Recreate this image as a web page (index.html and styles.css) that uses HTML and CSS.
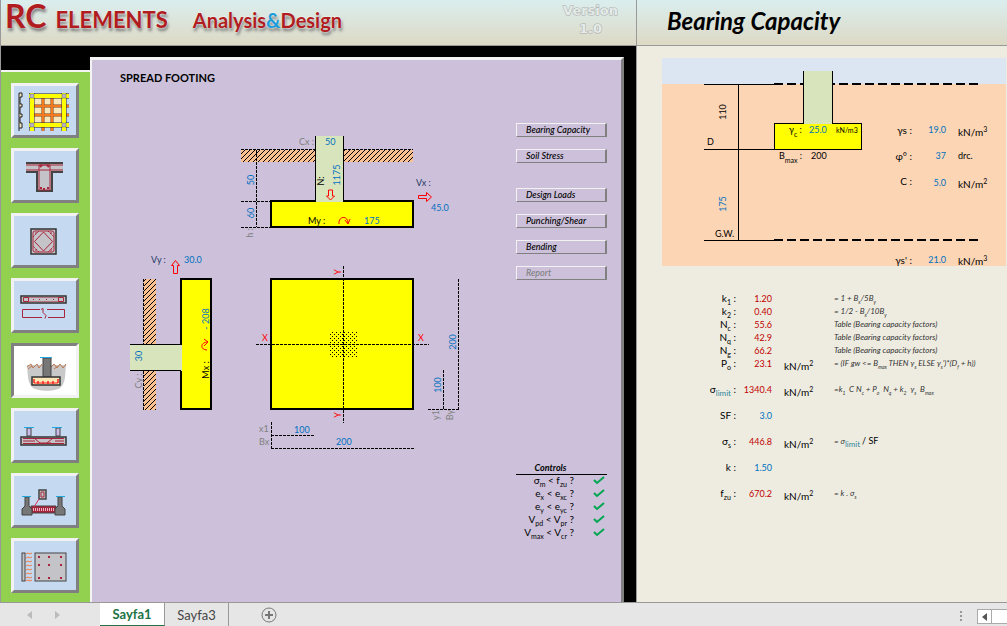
FILE: index.html
```html
<!DOCTYPE html>
<html lang="en">
<head>
  <meta charset="utf-8">
  <title>RC Elements - Spread Footing</title>
  <link rel="stylesheet" href="styles.css">
</head>
<body>
  <main class="panes">
    <section class="pane left">
      <header class="bar">
        <h1 class="logo"><span class="rc">RC</span> <span class="elements">ELEMENTS</span> <span class="analysis">Analysis<i>&amp;</i>Design</span></h1>
        <div class="version">Version<br>1.0</div>
      </header>

      <div class="workspace">
        <nav class="tools">
          <button class="tool" aria-label="Slab">
            <svg viewBox="0 0 62 48">
              <path d="M5 6v38M5 6h3v4H6v7h2v3H6v7h2v3H6v6h2v5H5" fill="#f4e8c0" stroke="#222"/>
              <rect x="17" y="8" width="34" height="31" fill="#f6e8bc" stroke="#222"/>
              <path d="M29 8v36M38 8v36M17 19h38M17 28h38" stroke="#7a3b12" stroke-width="3"/>
              <path d="M29 8v36M38 8v36M17 19h38M17 28h38" stroke="#f47a20" stroke-width="2"/>
              <path d="M18 6v38M50 6v38M15 9h40M15 38h40" stroke="#222" stroke-width="5"/>
              <path d="M18 6v38M50 6v38M15 9h40M15 38h40" stroke="#ff0" stroke-width="4"/>
              <path d="M16 7h4v4h-4zM48 7h4v4h-4zM16 36h4v4h-4zM48 36h4v4h-4z" fill="#b9b6c6" stroke="#666" stroke-width=".5"/>
            </svg>
          </button>
          <button class="tool" aria-label="Beam">
            <svg viewBox="0 0 62 48">
              <path d="M12 10h37v10H38v20H22V20H12z" fill="#c4c4c8"/>
              <path d="M12 11h37M12 20h11v19h15V20h11" fill="none" stroke="#444" stroke-width="2"/>
              <path d="M12 13h37M12 18h37M25 13h11v25H25z" fill="none" stroke="#a8243c"/>
              <path d="M26 15l2-2M35 15l-2-2M26 36h2M29 37h2M33 36h2" stroke="#a8243c" stroke-width="2"/>
            </svg>
          </button>
          <button class="tool" aria-label="Column">
            <svg viewBox="0 0 62 48">
              <rect x="17" y="12" width="25" height="25" fill="#c4c4c8" stroke="#333" stroke-width="1.5"/>
              <rect x="19" y="14" width="21" height="21" rx="2" fill="none" stroke="#a8243c"/>
              <path d="M29.500 15l9 9.500-9 9.500-9-9.500z" fill="none" stroke="#a8243c"/>
              <path d="M19 20l6-6M34 14l6 6M40 29l-6 6M25 35l-6-6M21 16h2M36 16h2M21 33h2M36 33h2" stroke="#a8243c" stroke-dasharray="2 1"/>
            </svg>
          </button>
          <button class="tool" aria-label="Shear wall">
            <svg viewBox="0 0 62 48">
              <rect x="7" y="14" width="45" height="7" fill="#c4c4c8" stroke="#333" stroke-width="1.500"/>
              <path d="M9.500 15.500h5v4h-5zM44.500 15.500h5v4h-5zM19 17.500h1M25 17.500h1M32 17.500h1M39 17.500h1" fill="none" stroke="#a8243c"/>
              <path d="M14 15.500h31M14 19.500h31" stroke="#a8243c" stroke-opacity=".5"/>
              <path d="M14 35.500H8.500v-8H26M44 27.500h6.500v8H34M14 35.500h14M33 27.500h11M27 27.500l2-1v4l3 3-1 3" fill="none" stroke="#a8243c"/>
            </svg>
          </button>
          <button class="tool active" aria-label="Spread footing">
            <svg viewBox="0 0 62 48">
              <path d="M13 18h39c-1 8 0 17-5 22-4 5-24 5-29 0-5-5-4-14-5-22z" fill="#c9c9c9"/>
              <path d="M13 20l4-3 2 4 4-4 2 4 3-4M37 20l3-3 3 4 3-4 3 4 3-4M14 22l4-3M40 22l4-3" fill="none" stroke="#c07850"/>
              <path d="M29 11h8v19h-8z" fill="#777" stroke="#444"/>
              <path d="M26 10.500h12" stroke="#20a8e0"/>
              <rect x="18" y="30" width="28" height="8" fill="#f8e6b4" stroke="#333" stroke-width="1.500"/>
              <path d="M20 36h24" stroke="#f22" stroke-width="1"/>
              <path d="M20 32v4M44 32v4M24 34v3M29 34v3M34 34v3M39 34v3" stroke="#f22" stroke-width="1.500"/>
            </svg>
          </button>
          <button class="tool" aria-label="Combined footing">
            <svg viewBox="0 0 62 48">
              <path d="M13 16h4v8h-4zM42 16h4v8h-4z" fill="#cdbcea" stroke="#444"/>
              <path d="M10 15.500h10M38 15.500h10" stroke="#20a8e0"/>
              <rect x="7" y="25" width="45" height="8" fill="#c4c4c8" stroke="#333" stroke-width="1.500"/>
              <path d="M9 26.500h41M9 31.500h41M9 29h12M25 31h12M41 29h9M20 26l6 5M39 26l-6 5" stroke="#a8243c"/>
            </svg>
          </button>
          <button class="tool" aria-label="Tie beam">
            <svg viewBox="0 0 62 48">
              <path d="M17 29h25v7H17z" fill="#a8243c" stroke="#444"/>
              <path d="M19 32.500h22" stroke="#eab8c4" stroke-width="3" stroke-dasharray="1 1"/>
              <path d="M11 20h4v9l3 3v6H8v-6l3-3zM44 20h4v9l3 3v6H41v-6l3-3z" fill="#777" stroke="#444"/>
              <path d="M8 19.500h9M42 19.500h9" stroke="#20a8e0"/>
              <path d="M25 13h7v9h-7z" fill="#c4c4c8" stroke="#444" stroke-width="1.500"/>
              <path d="M27 15h3v5h-3z" fill="none" stroke="#a8243c"/>
              <path d="M25 22l-5 8" stroke="#e03050"/>
            </svg>
          </button>
          <button class="tool" aria-label="Retaining wall">
            <svg viewBox="0 0 62 48">
              <rect x="8" y="11" width="3" height="28" fill="#c4c4c8" stroke="#444"/>
              <path d="M12 12l2-1 2 1 2-1M12 16l2-1 2 1 2-1M12 20l2-1 2 1 2-1M12 24l2-1 2 1 2-1M12 28l2-1 2 1 2-1M12 32l2-1 2 1 2-1M12 36l2-1 2 1 2-1M12 39l2-1 2 1 2-1" fill="none" stroke="#f47a40"/>
              <rect x="21" y="11" width="31" height="28" fill="#c4c4c8" stroke="#444"/>
              <path d="M24 15h2M34 15h2M46 15h2M24 23h2M34 23h2M46 23h2M24 36h2M34 36h2M46 36h2" stroke="#a8243c" stroke-width="2"/>
            </svg>
          </button>
        </nav>

        <div class="sheet">
          <h2 class="sheet-title">SPREAD FOOTING</h2>
          <div class="sheet-body">
            <svg class="drawing" viewBox="0 0 350 340">
              <defs>
                <pattern id="hatch" width="5" height="5" patternUnits="userSpaceOnUse">
                  <rect width="5" height="5" fill="#fac090"/>
                  <path d="M-1 6L6 -1M-1 1L1 -1M4 6L6 4" stroke="#000"/>
                </pattern>
                <pattern id="dots" width="4" height="4" patternUnits="userSpaceOnUse">
                  <path d="M0 0h1v1H0zM2 2h1v1H2z" fill="#000"/>
                </pattern>
              </defs>

              <!-- section x -->
              <path d="M121 30h74v12h-74zM223 30h70v12h-70z" fill="url(#hatch)"/>
              <rect class="footing" x="151" y="81" width="142" height="26"/>
              <path class="concrete" d="M196 16h27v66h-27z"/>
              <path class="line" d="M195.500 16v65M223.500 16v65"/>
              <path class="dash" d="M121 29.500h74M224 29.500h69M136.500 30v77M121 81.500h30M121 107.500h30"/>
              <text class="muted" x="179" y="25">Cx :</text>
              <text class="input" x="205" y="25">50</text>
              <text class="input mid" transform="translate(134 60) rotate(-90)">50</text>
              <text class="input mid" transform="translate(134 93) rotate(-90)">60</text>
              <text class="muted mid" transform="translate(133 113) rotate(-90)">h :</text>
              <text class="mid" transform="translate(204 61) rotate(-90)">N:</text>
              <text class="input mid" transform="translate(220 55) rotate(-90)">1175</text>
              <path class="arrow" d="M208.500 70v6h-2l4 4 4-4h-2v-6z"/>
              <text class="name" x="296" y="66">Vx :</text>
              <path class="arrow" d="M298.500 75.500h8v-3l5 4.500-5 4.500v-3h-8z"/>
              <text class="input" x="311" y="91">45.0</text>
              <text x="188" y="104">My :</text>
              <path class="arrow" d="M219 104c-1-8 9-9 9-1M225 100l3 4 2-5"/>
              <text class="input" x="244" y="104">175</text>

              <!-- section y -->
              <path d="M24 159h12v65H24zM24 251h12v39H24z" fill="url(#hatch)"/>
              <rect class="footing" x="61" y="159" width="30" height="130"/>
              <path class="concrete" d="M10 225h52v26H10z"/>
              <path class="line" d="M10 224.500h51M10 250.500h51"/>
              <path class="dash" d="M23.500 159v65M23.500 251v39"/>
              <text class="name" x="31" y="143">Vy :</text>
              <path class="arrow" d="M53.500 153.500v-8h-2l4-5 4 5h-2v8z"/>
              <text class="input" x="64" y="143">30.0</text>
              <text class="input mid" transform="translate(22 236) rotate(-90)">30</text>
              <text class="muted mid" transform="translate(22 261) rotate(-90)">Cy :</text>
              <text class="mid" transform="translate(89 250) rotate(-90)">Mx :</text>
              <text class="input mid" transform="translate(89 199) rotate(-90)">- 208</text>
              <path class="arrow" d="M87 230c-7 0-7-8 1-8M84 219l4 3-4 4"/>

              <!-- plan -->
              <rect class="footing" x="151" y="159" width="142" height="130"/>
              <rect x="210" y="211" width="27" height="26" fill="url(#dots)"/>
              <path class="dash" d="M223.500 146v157M136 224.500h173"/>
              <text class="axis mid" x="145" y="221">X</text>
              <text class="axis mid" x="301" y="221">X</text>
              <text class="axis mid" transform="translate(221 152) rotate(-90)">Y</text>
              <text class="axis mid" transform="translate(221 295) rotate(-90)">Y</text>
              <path class="dash" d="M151.500 302v26M151 315.500h44M151 328.500h143M338.500 159v130M323.500 250v39M308 289.500h31"/>
              <text class="muted" x="139" y="312">x1</text>
              <text class="muted" x="139" y="325">Bx</text>
              <text class="input" x="174" y="313">100</text>
              <text class="input" x="216" y="325">200</text>
              <text class="input mid" transform="translate(336 222) rotate(-90)">200</text>
              <text class="input mid" transform="translate(321 265) rotate(-90)">100</text>
              <text class="muted mid" transform="translate(319 295) rotate(-90)">y1</text>
              <text class="muted mid" transform="translate(333 295) rotate(-90)">By</text>
            </svg>

            <div class="side">
              <div class="menu">
                <button>Bearing Capacity</button>
                <button>Soil Stress</button>
                <button class="group">Design Loads</button>
                <button>Punching/Shear</button>
                <button>Bending</button>
                <button disabled>Report</button>
              </div>
              <table class="controls">
                <caption>Controls</caption>
                <tr><td>σ<sub>m</sub> &lt; f<sub>zu</sub> ?</td><td><svg class="check" viewBox="0 0 12 9"><path d="M1 4l3 3 7-6"/></svg></td></tr>
                <tr><td>e<sub>x</sub> &lt; e<sub>xc</sub> ?</td><td><svg class="check" viewBox="0 0 12 9"><path d="M1 4l3 3 7-6"/></svg></td></tr>
                <tr><td>e<sub>y</sub> &lt; e<sub>yc</sub> ?</td><td><svg class="check" viewBox="0 0 12 9"><path d="M1 4l3 3 7-6"/></svg></td></tr>
                <tr><td>V<sub>pd</sub> &lt; V<sub>pr</sub> ?</td><td><svg class="check" viewBox="0 0 12 9"><path d="M1 4l3 3 7-6"/></svg></td></tr>
                <tr><td>V<sub>max</sub> &lt; V<sub>cr</sub> ?</td><td><svg class="check" viewBox="0 0 12 9"><path d="M1 4l3 3 7-6"/></svg></td></tr>
              </table>
            </div>
          </div>
        </div>
      </div>
    </section>

    <section class="pane right">
      <header class="bar">
        <h2 class="page-title">Bearing Capacity</h2>
      </header>
      <div class="report">
        <svg class="soil" viewBox="0 0 344 208">
          <rect width="344" height="26" fill="#dce6f2"/>
          <rect y="26" width="344" height="182" fill="#fcd5b5"/>
          <path class="line" d="M42 26.500h70M42 91.500h70M42 182.500h70M76.500 26v157"/>
          <path class="ground" d="M112 26h204M112 182h204"/>
          <rect class="footing thin" x="112.500" y="65.500" width="87" height="26"/>
          <path class="concrete" d="M142 13h28v53h-28z"/>
          <path class="line" d="M141.500 13v53M170.500 13v53"/>
          <text class="mid" transform="translate(64 54) rotate(-90)">110</text>
          <text class="input mid" transform="translate(64 146) rotate(-90)">175</text>
          <text x="45" y="87">D</text>
          <text x="53" y="179">G.W.</text>
          <text x="127" y="75">γ<tspan class="sub">c</tspan> :</text>
          <text class="input" x="147" y="75">25.0</text>
          <text class="small" x="174" y="75">kN/m3</text>
          <text x="117" y="101">B<tspan class="sub">max</tspan> :</text>
          <text x="149" y="101">200</text>
          <text class="large end" x="250" y="76">γs :</text>
          <text class="input end" x="284" y="75">19.0</text>
          <text class="large" x="296" y="78">kN/m<tspan class="sup">3</tspan></text>
          <text class="large end" x="250" y="102">φ° :</text>
          <text class="input end" x="284" y="101">37</text>
          <text x="296" y="101">drc.</text>
          <text class="large end" x="250" y="127">C :</text>
          <text class="input end" x="284" y="128">5.0</text>
          <text class="large" x="296" y="130">kN/m<tspan class="sup">2</tspan></text>
          <text class="large end" x="250" y="206">γs' :</text>
          <text class="input end" x="284" y="205">21.0</text>
          <text class="large" x="296" y="207">kN/m<tspan class="sup">3</tspan></text>
        </svg>

        <table class="results">
          <tr><th>k<sub>1</sub> :</th><td class="value">1.20</td><td></td><td class="note">= 1 + B<sub>x</sub>/5B<sub>y</sub></td></tr>
          <tr><th>k<sub>2</sub> :</th><td class="value">0.40</td><td></td><td class="note">= 1/2 - B<sub>x</sub>/10B<sub>y</sub></td></tr>
          <tr><th>N<sub>c</sub> :</th><td class="value">55.6</td><td></td><td class="note">Table (Bearing capacity factors)</td></tr>
          <tr><th>N<sub>q</sub> :</th><td class="value">42.9</td><td></td><td class="note">Table (Bearing capacity factors)</td></tr>
          <tr><th>N<sub>g</sub> :</th><td class="value">66.2</td><td></td><td class="note">Table (Bearing capacity factors)</td></tr>
          <tr><th>P<sub>o</sub> :</th><td class="value">23.1</td><td class="unit"><span>kN/m<sup>2</sup></span></td><td class="note">= (IF gw &lt;= B<sub>max</sub> THEN γ<sub>s</sub> ELSE γ<sub>s</sub>')*(D<sub>f</sub> + h))</td></tr>
          <tr class="tall"><th>σ<sub class="teal">limit</sub> :</th><td class="value">1340.4</td><td class="unit"><span>kN/m<sup>2</sup></span></td><td class="note">=k<sub>1</sub> &nbsp;C N<sub>c</sub> + P<sub>o</sub> &nbsp;N<sub>q</sub> + k<sub>2</sub> &nbsp;γ<sub>s</sub> &nbsp;B<sub>max</sub></td></tr>
          <tr class="tall"><th>SF :</th><td class="value blue">3.0</td><td></td><td></td></tr>
          <tr class="tall"><th>σ<sub>s</sub> :</th><td class="value">446.8</td><td class="unit"><span>kN/m<sup>2</sup></span></td><td class="note">= σ<sub class="teal">limit</sub> <span class="sf">/ SF</span></td></tr>
          <tr class="tall"><th>k :</th><td class="value blue">1.50</td><td></td><td></td></tr>
          <tr class="tall"><th>f<sub>zu</sub> :</th><td class="value">670.2</td><td class="unit"><span>kN/m<sup>2</sup></span></td><td class="note">= k . σ<sub>s</sub></td></tr>
        </table>
      </div>
    </section>
  </main>

  <footer class="tabs">
    <div class="arrows">
      <button aria-label="Previous sheet"><svg viewBox="0 0 5 8"><path d="M5 0v8L0 4z"/></svg></button>
      <button aria-label="Next sheet"><svg viewBox="0 0 5 8"><path d="M0 0v8l5-4z"/></svg></button>
    </div>
    <button class="tab selected">Sayfa1</button>
    <button class="tab">Sayfa3</button>
    <button class="add" aria-label="New sheet"><svg viewBox="0 0 16 16"><circle cx="8" cy="8" r="7"/><path class="plus" d="M8 4v8M4 8h8"/></svg></button>
    <div class="grip"></div>
    <button class="scroll" aria-label="Scroll left"><svg viewBox="0 0 5 8"><path d="M5 0v8L0 4z"/></svg></button>
    <div class="thumb"></div>
  </footer>
</body>
</html>
```

FILE: styles.css
```css
* {
  box-sizing: border-box;
}

body {
  margin: 0;
  min-height: 100vh;
  display: flex;
  flex-direction: column;
  font-family: Lato, "Liberation Sans", sans-serif;
  font-size: 10px;
  color: #000;
}

h1, h2 {
  margin: 0;
}

button {
  font: inherit;
  color: inherit;
  padding: 0;
}

sub, sup {
  font-size: 7px;
  line-height: 0;
}

/* Panes */
.panes {
  flex: 1;
  display: grid;
  grid-template-columns: minmax(0, 12fr) minmax(0, 7fr);
}

.pane {
  display: flex;
  flex-direction: column;
  border-left: 1px solid #999;
}

.bar {
  height: 46px;
  display: flex;
  justify-content: space-between;
  background: linear-gradient(#daeeee, #ddd9c5);
  border-bottom: 1px solid #999;
}

/* Logo */
.logo {
  display: flex;
  align-items: baseline;
  padding-left: 4px;
  line-height: 32px;
  color: #b01c20;
  text-shadow: 0 0 2px #fff, 1px 3px 3px #777;
}

.rc {
  font-size: 32px;
}

.elements {
  font-size: 22px;
  margin-left: 9px;
}

.analysis {
  font-size: 20px;
  margin-left: 25px;
}

.analysis i {
  font-style: normal;
  color: #1c9cd8;
}

.version {
  padding: 2px 18px 0 0;
  font: bold 13px/18px "DejaVu Sans", sans-serif;
  text-align: center;
  color: #e4ebe8;
  -webkit-text-stroke: 1px #aaa;
  paint-order: stroke;
}

.page-title {
  padding-left: 30px;
  font-size: 24px;
  line-height: 42px;
  font-style: italic;
}

/* Left side */
.workspace {
  flex: 1;
  display: flex;
  background: #000;
  padding: 11px 12px 0 0;
}

.tools {
  width: 89px;
  margin-top: 13px;
  padding: 11px 0 9px 10px;
  border-top: 2px solid #f4f4f4;
  background: #92d050;
  display: flex;
  flex-direction: column;
  gap: 10px;
}

.tool {
  width: 68px;
  height: 55px;
  background: #c5d9f1;
  border: 3px solid;
  border-color: #f2f2f2 #808080 #808080 #f2f2f2;
}

.tool.active {
  background: #fff;
  border-color: #808080 #f2f2f2 #f2f2f2 #808080;
}

.tool svg {
  display: block;
  width: 62px;
  height: 48px;
  fill: none;
}

.sheet {
  flex: 1;
  background: #ccc0da;
  border: 3px solid #808080;
  border-width: 3px 3px 0 2px;
  border-top-color: #f4f4f4;
  border-left-color: #f4f4f4;
  padding: 10px 14px 0 28px;
}

.sheet-title {
  font-size: 11px;
  line-height: 16px;
}

.sheet-body {
  display: flex;
  justify-content: space-between;
  padding-top: 34px;
}

/* Drawings */
.drawing {
  flex: none;
  width: 350px;
  height: 340px;
}

.drawing text, .soil text {
  font-size: 9px;
}

.footing {
  fill: #ff0;
  stroke: #000;
  stroke-width: 2px;
}

.footing.thin {
  stroke-width: 1px;
}

.concrete {
  fill: #d8e4bc;
}

.line, .dash, .ground {
  fill: none;
  stroke: #000;
  shape-rendering: crispEdges;
}

.dash {
  stroke-dasharray: 3 1;
}

.ground {
  stroke-width: 2px;
  stroke-dasharray: 9 4;
}

.arrow {
  fill: none;
  stroke: #f00;
}

.mid {
  text-anchor: middle;
}

.end {
  text-anchor: end;
}

.input {
  fill: #0070c0;
}

.muted {
  fill: #808080;
}

.name {
  fill: #1f3864;
}

.axis {
  fill: #f00;
}

.soil .large {
  font-size: 10px;
}

.soil .small {
  font-size: 7px;
}

.sub {
  font-size: 7px;
  baseline-shift: sub;
}

.sup {
  font-size: 7px;
  baseline-shift: super;
}

/* Buttons and checks */
.side {
  width: 91px;
  padding-top: 3px;
}

.menu {
  display: flex;
  flex-direction: column;
  gap: 12px;
}

.menu button {
  height: 14px;
  padding-left: 9px;
  background: none;
  border: 1px solid;
  border-color: #f2f2f2 #808080 #808080 #f2f2f2;
  border-right-width: 2px;
  font-size: 9px;
  line-height: 12px;
  font-weight: 500;
  font-style: italic;
  text-align: left;
}

.menu .group {
  margin-top: 13px;
}

.menu button:disabled {
  color: #808080;
}

.controls {
  width: 100%;
  margin-top: 182px;
  border-collapse: collapse;
}

.controls caption {
  padding-right: 22px;
  border-bottom: 1px solid #000;
  font-size: 9px;
  line-height: 12px;
  font-weight: bold;
  font-style: italic;
}

.controls td {
  height: 13px;
  padding: 0;
  line-height: 11px;
  text-align: right;
  vertical-align: top;
  white-space: nowrap;
}

.controls td:first-child {
  width: 58px;
}

.check {
  display: block;
  width: 12px;
  height: 9px;
  margin: 1px 2px 0 auto;
  fill: none;
  stroke: #00a650;
  stroke-width: 2px;
}

/* Right side */
.right {
  background: #eeece1;
}

.report {
  padding: 12px 1px 0 25px;
}

.soil {
  display: block;
  width: 100%;
  overflow: visible;
}

.results {
  margin-top: 26px;
  border-collapse: collapse;
}

.results th, .results td {
  height: 13px;
  padding: 0;
  line-height: 13px;
  vertical-align: bottom;
  white-space: nowrap;
}

.results .tall td, .results .tall th {
  height: 26px;
}

.results th {
  width: 74px;
  font-size: 10px;
  font-weight: normal;
  text-align: right;
}

.results .value {
  width: 36px;
  font-size: 9px;
  text-align: right;
  color: #c00000;
}

.results .blue {
  color: #0070c0;
}

.results td:nth-child(3) {
  width: 62px;
  padding-left: 12px;
}

/* units hang a little below their row */
.unit span {
  display: block;
  margin-bottom: -3px;
}

.results .note {
  font-size: 8px;
  font-style: italic;
  color: #333;
}

.note sub {
  font-size: 5px;
}

.results .teal {
  font-size: 8px;
  font-style: normal;
  color: #31869b;
}

.note .sf {
  font-size: 9px;
  font-style: normal;
  color: #000;
}

/* Sheet tabs */
.tabs {
  height: 24px;
  display: flex;
  background: #e6e6e6;
  border-top: 1px solid #999;
}

.tabs button {
  background: none;
  border: 0;
}

.arrows {
  width: 100px;
  padding: 0 40px 0 27px;
  display: flex;
  justify-content: space-between;
}

.arrows svg, .scroll svg {
  width: 5px;
  height: 8px;
  fill: #bbb;
}

.tabs .tab {
  width: 64px;
  font-size: 13px;
  color: #444;
  border-right: 1px solid #999;
}

.tabs .selected {
  width: 65px;
  background: #fff;
  border-bottom: 1px solid #217346;
  font-weight: bold;
  color: #217346;
}

.add {
  margin-left: 32px;
}

.add svg {
  display: block;
  width: 16px;
  height: 16px;
  fill: none;
  stroke: #777;
}

.plus {
  stroke-width: 2px;
}

.grip {
  width: 2px;
  height: 10px;
  margin: 8px 15px 0 auto;
  border-left: 2px dotted #999;
}

.tabs .scroll {
  width: 15px;
  height: 15px;
  margin-top: 6px;
  background: #fff;
  border: 1px solid #aaa;
}

.scroll svg {
  display: block;
  margin: auto;
  fill: #555;
}

.thumb {
  width: 15px;
  height: 15px;
  margin-top: 6px;
  background: #fff;
  border: 1px solid #aaa;
  border-width: 1px 0;
}
```
